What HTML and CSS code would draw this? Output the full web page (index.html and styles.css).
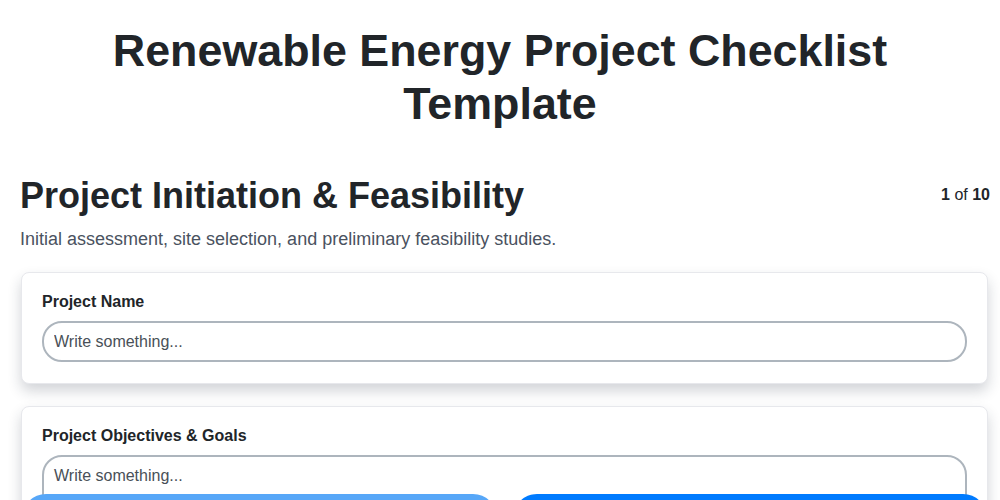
FILE: index.html
```html
<!DOCTYPE html>
<html lang="en">
<head>
<meta charset="utf-8">
<title>Renewable Energy Project Checklist Template</title>
<link rel="stylesheet" href="styles.css">
</head>
<body>
<main class="page">
  <h1 class="title">Renewable Energy Project Checklist Template</h1>
  <section class="step">
    <header class="step-head">
      <h2 class="step-title">Project Initiation &amp; Feasibility</h2>
      <div class="step-count"><b>1</b> of <b>10</b></div>
    </header>
    <p class="step-desc">Initial assessment, site selection, and preliminary feasibility studies.</p>
    <div class="card">
      <label class="field-label">Project Name</label>
      <input class="field-input" type="text" placeholder="Write something...">
    </div>
    <div class="card">
      <label class="field-label">Project Objectives &amp; Goals</label>
      <textarea class="field-area" placeholder="Write something..."></textarea>
    </div>
  </section>
</main>
<nav class="nav">
  <button class="btn btn-prev" aria-label="Previous"></button>
  <button class="btn btn-next" aria-label="Next"></button>
</nav>
</body>
</html>
```
FILE: styles.css
```css
* { box-sizing: border-box; }
html, body { margin: 0; padding: 0; background: #fff; }
body {
  font-family: "Liberation Sans", Arial, sans-serif;
  color: #212529;
  overflow: hidden;
}
.page { padding: 24px 10px 80px 20px; }
.title {
  margin: 0 10px 44px 0;
  text-align: center;
  font-size: 44.8px;
  line-height: 53px;
  font-weight: 700;
}
.step-head {
  display: flex;
  justify-content: space-between;
  align-items: flex-start;
}
.step-title {
  margin: 0;
  font-size: 36px;
  line-height: 43px;
  font-weight: 700;
}
.step-count {
  font-size: 16px;
  padding-top: 12px;
}
.step-desc {
  margin: 10px 0 21px;
  font-size: 18px;
  line-height: 24px;
  color: #4a5260;
}
.card {
  margin: 0 2px 22px 1px;
  border: 1px solid #e7e8ec;
  border-radius: 8px;
  padding: 19px 20px 21px;
  box-shadow: 0 7px 14px rgba(30, 40, 60, 0.2);
  background: #fff;
}
.field-label {
  display: block;
  font-size: 16px;
  font-weight: 700;
  line-height: 20px;
  margin-bottom: 9px;
}
.field-input, .field-area {
  display: block;
  width: 100%;
  border: 2px solid #adb5bd;
  border-radius: 20px;
  padding: 9px 10px;
  font-family: "Liberation Sans", Arial, sans-serif;
  font-size: 16px;
  line-height: 19px;
  color: #495057;
  background: #fff;
  outline: none;
}
.field-input { height: 41px; }
.field-area { height: 100px; resize: none; }
.field-input::placeholder, .field-area::placeholder { color: #495057; }
.nav {
  position: fixed;
  left: 22px;
  right: 13px;
  top: 494px;
  display: grid;
  grid-template-columns: 1fr 1fr;
  gap: 16px;
}
.btn {
  height: 48px;
  border: none;
  border-radius: 24px;
  font-family: "Liberation Sans", Arial, sans-serif;
  font-size: 16px;
  color: #fff;
}
.btn-prev { background: #57a7f8; }
.btn-next { background: #007bff; }
```
